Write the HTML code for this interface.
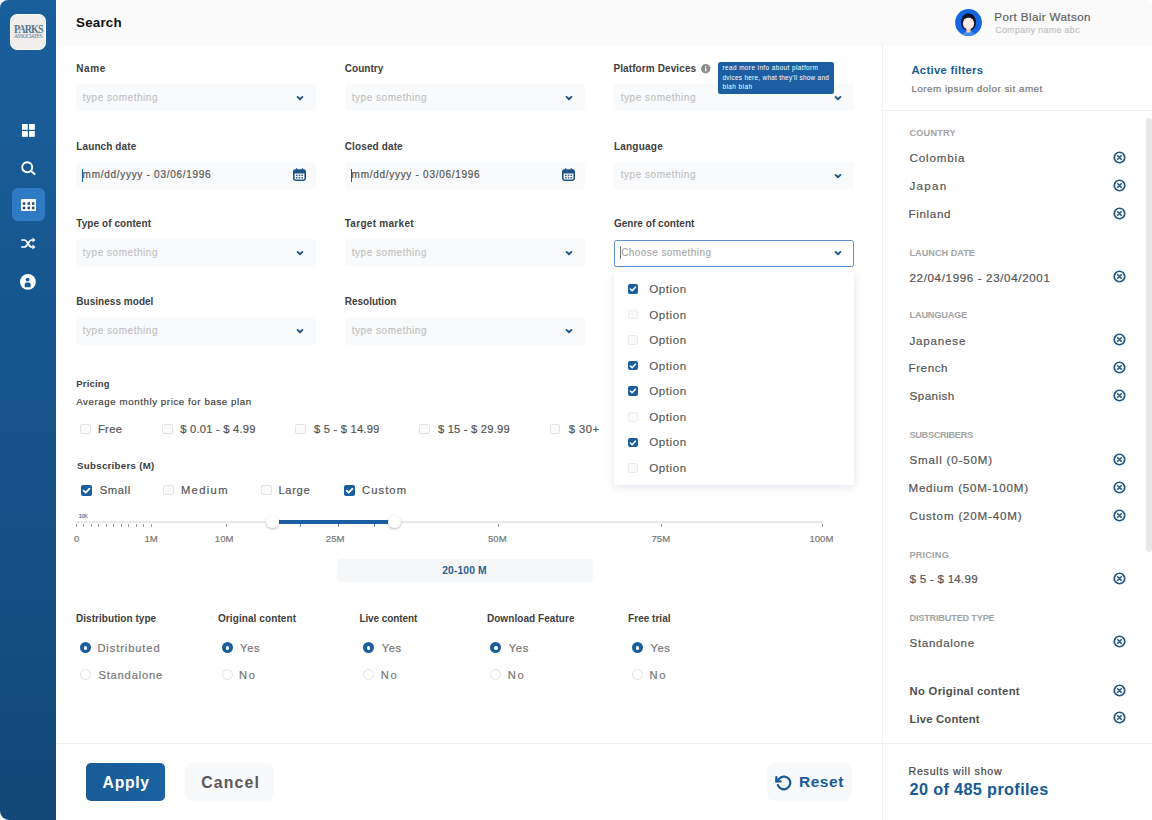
<!DOCTYPE html>
<html><head><meta charset="utf-8">
<style>
*{margin:0;padding:0;box-sizing:border-box}
html,body{width:1152px;height:820px;overflow:hidden;background:#fff;font-family:"Liberation Sans",sans-serif;position:relative}
.a{position:absolute;white-space:nowrap;line-height:1}
</style></head><body>
<div class="a" style="left:0;top:0;width:56px;height:820px;border-radius:8px 0 0 9px;background:linear-gradient(#195f9c,#124878)"></div>
<div class="a" style="left:10px;top:14px;width:36px;height:36px;border-radius:7px;background:#efeeec;border:1px solid #fafafa"></div>
<div class="a" style="left:13.6px;top:24.2px;font-family:'Liberation Serif',serif;font-size:11.2px;font-weight:bold;color:#56778f;letter-spacing:-1.05px;transform-origin:left top;transform:scale(0.9,1.05)">PARKS</div>
<div class="a" style="left:13.8px;top:32.2px;font-family:'Liberation Serif',serif;font-size:6px;color:#56778f;letter-spacing:-0.55px;transform-origin:left top;transform:scale(0.93,1.1)">ASSOCIATES</div>
<svg class="a" style="left:22px;top:124px" width="13" height="13" viewBox="0 0 13 13"><g fill="#fff"><rect x="0" y="0" width="5.8" height="5.8"/><rect x="7" y="0" width="5.8" height="5.8"/><rect x="0" y="7" width="5.8" height="5.8"/><rect x="7" y="7" width="5.8" height="5.8"/></g></svg>
<svg class="a" style="left:20.5px;top:160.5px" width="15" height="14" viewBox="0 0 15 14"><circle cx="6.2" cy="6.2" r="5" fill="none" stroke="#fff" stroke-width="1.9"/><path d="M10 10 L13.5 13" stroke="#fff" stroke-width="2" stroke-linecap="round"/></svg>
<div class="a" style="left:11.5px;top:188.3px;width:33.2px;height:32.7px;border-radius:6px;background:#2f7bc3"></div>
<svg class="a" style="left:20.5px;top:199px" width="15.5" height="12" viewBox="0 0 15.5 12"><rect x="0" y="0" width="15.5" height="12" rx="1.2" fill="#fff"/><g fill="#1f4a72"><rect x="1.8" y="3.3" width="2.5" height="2.5"/><rect x="6.5" y="3.3" width="2.5" height="2.5"/><rect x="10.9" y="3.3" width="2.5" height="2.5"/><rect x="1.8" y="7.7" width="2.5" height="2.5"/><rect x="6.5" y="7.7" width="2.5" height="2.5"/><rect x="10.9" y="7.7" width="2.5" height="2.5"/></g></svg>
<svg class="a" style="left:20.5px;top:237px" width="15" height="13" viewBox="0 0 15 13"><g fill="none" stroke="#fff" stroke-width="1.7" stroke-linecap="round"><path d="M0.8 3 H3.5 C6.5 3 7.5 10 10.5 10 H12.5"/><path d="M0.8 10 H3.5 C6.5 10 7.5 3 10.5 3 H12.5"/></g><path d="M11.5 0.5 L14.5 3 L11.5 5.5 Z M11.5 7.5 L14.5 10 L11.5 12.5 Z" fill="#fff"/></svg>
<svg class="a" style="left:20.3px;top:274px" width="15.8" height="15.8" viewBox="0 0 16 16"><circle cx="8" cy="8" r="8" fill="#fff"/><circle cx="7.7" cy="5.6" r="1.9" fill="#1a5a95"/><path d="M4.8 13.4 V10.6 C4.8 9.4 5.6 8.6 6.8 8.6 H8.8 C10 8.6 10.8 9.4 10.8 10.6 V13.4 Z" fill="#1a5a95"/></svg>
<div class="a" style="left:56px;top:0;width:1096px;height:44.8px;background:#fafafa;border-radius:0 6px 0 0"></div>
<svg class="a" style="left:955.4px;top:8.7px" width="27" height="27" viewBox="0 0 27 27"><defs><clipPath id="cc"><circle cx="13.5" cy="13.5" r="13.4"/></clipPath></defs><circle cx="13.5" cy="13.5" r="13.4" fill="#1565e3"/><g clip-path="url(#cc)"><ellipse cx="13.5" cy="13.2" rx="7.6" ry="8.5" fill="#0f1530"/><path d="M5.5 28 C6.5 24 9.5 22.6 13.5 22.6 C17.5 22.6 20.5 24 21.5 28 Z" fill="#3f8bf0"/><rect x="11.4" y="18.5" width="4.2" height="5" fill="#f6cdb9"/><ellipse cx="13.5" cy="14.6" rx="5.6" ry="6" fill="#fbeae3"/><path d="M7.2 10.5 C7.5 6 10 4.6 13.5 4.6 C17 4.6 19.5 6 19.8 10.5 C18 8.6 16 8.3 13.5 8.3 C11 8.3 9 8.6 7.2 10.5 Z" fill="#0f1530"/></g></svg>
<div class="a" style="left:76px;top:84px;width:240px;height:27.4px;background:#f9fafb;border-radius:3px"></div>
<svg class="a" style="left:296.2px;top:95px" width="8" height="6" viewBox="0 0 8 6"><path d="M1.6 1.9 L4 4.2 L6.4 1.9" fill="none" stroke="#1d5486" stroke-width="1.9" stroke-linecap="round" stroke-linejoin="round"/></svg>
<div class="a" style="left:345px;top:84px;width:240px;height:27.4px;background:#f9fafb;border-radius:3px"></div>
<svg class="a" style="left:565.2px;top:95px" width="8" height="6" viewBox="0 0 8 6"><path d="M1.6 1.9 L4 4.2 L6.4 1.9" fill="none" stroke="#1d5486" stroke-width="1.9" stroke-linecap="round" stroke-linejoin="round"/></svg>
<div class="a" style="left:614px;top:84px;width:240px;height:27.4px;background:#f9fafb;border-radius:3px"></div>
<svg class="a" style="left:834.2px;top:95px" width="8" height="6" viewBox="0 0 8 6"><path d="M1.6 1.9 L4 4.2 L6.4 1.9" fill="none" stroke="#1d5486" stroke-width="1.9" stroke-linecap="round" stroke-linejoin="round"/></svg>
<div class="a" style="left:76px;top:161.6px;width:240px;height:27.4px;background:#f9fafb;border-radius:3px"></div>
<div class="a" style="left:82.2px;top:168.6px;width:1.2px;height:13.5px;background:#1b5e9e"></div>
<svg class="a" style="left:292.5px;top:168.0px" width="13" height="13" viewBox="0 0 13 13"><rect x="0.8" y="2" width="11.4" height="10.2" rx="1.6" fill="#fff" stroke="#1d5486" stroke-width="1.6"/><rect x="0.8" y="2" width="11.4" height="3.4" rx="1" fill="#1d5486"/><rect x="2.8" y="0.3" width="1.5" height="2.6" rx="0.5" fill="#1d5486"/><rect x="8.7" y="0.3" width="1.5" height="2.6" rx="0.5" fill="#1d5486"/><g fill="#3d6186"><rect x="2.9" y="6.6" width="1.7" height="1.5"/><rect x="5.65" y="6.6" width="1.7" height="1.5"/><rect x="8.4" y="6.6" width="1.7" height="1.5"/><rect x="2.9" y="9" width="1.7" height="1.5"/><rect x="5.65" y="9" width="1.7" height="1.5"/><rect x="8.4" y="9" width="1.7" height="1.5"/></g></svg>
<div class="a" style="left:345px;top:161.6px;width:240px;height:27.4px;background:#f9fafb;border-radius:3px"></div>
<div class="a" style="left:351.2px;top:168.6px;width:1.2px;height:13.5px;background:#1b5e9e"></div>
<svg class="a" style="left:561.5px;top:168.0px" width="13" height="13" viewBox="0 0 13 13"><rect x="0.8" y="2" width="11.4" height="10.2" rx="1.6" fill="#fff" stroke="#1d5486" stroke-width="1.6"/><rect x="0.8" y="2" width="11.4" height="3.4" rx="1" fill="#1d5486"/><rect x="2.8" y="0.3" width="1.5" height="2.6" rx="0.5" fill="#1d5486"/><rect x="8.7" y="0.3" width="1.5" height="2.6" rx="0.5" fill="#1d5486"/><g fill="#3d6186"><rect x="2.9" y="6.6" width="1.7" height="1.5"/><rect x="5.65" y="6.6" width="1.7" height="1.5"/><rect x="8.4" y="6.6" width="1.7" height="1.5"/><rect x="2.9" y="9" width="1.7" height="1.5"/><rect x="5.65" y="9" width="1.7" height="1.5"/><rect x="8.4" y="9" width="1.7" height="1.5"/></g></svg>
<div class="a" style="left:614px;top:161.6px;width:240px;height:27.4px;background:#f9fafb;border-radius:3px"></div>
<svg class="a" style="left:834.2px;top:172.6px" width="8" height="6" viewBox="0 0 8 6"><path d="M1.6 1.9 L4 4.2 L6.4 1.9" fill="none" stroke="#1d5486" stroke-width="1.9" stroke-linecap="round" stroke-linejoin="round"/></svg>
<div class="a" style="left:76px;top:239px;width:240px;height:27.4px;background:#f9fafb;border-radius:3px"></div>
<svg class="a" style="left:296.2px;top:250px" width="8" height="6" viewBox="0 0 8 6"><path d="M1.6 1.9 L4 4.2 L6.4 1.9" fill="none" stroke="#1d5486" stroke-width="1.9" stroke-linecap="round" stroke-linejoin="round"/></svg>
<div class="a" style="left:345px;top:239px;width:240px;height:27.4px;background:#f9fafb;border-radius:3px"></div>
<svg class="a" style="left:565.2px;top:250px" width="8" height="6" viewBox="0 0 8 6"><path d="M1.6 1.9 L4 4.2 L6.4 1.9" fill="none" stroke="#1d5486" stroke-width="1.9" stroke-linecap="round" stroke-linejoin="round"/></svg>
<div class="a" style="left:614px;top:239.5px;width:239.5px;height:27px;background:#fff;border:1.5px solid #5891ca;border-radius:2.5px"></div>
<div class="a" style="left:620px;top:246px;width:1px;height:13px;background:#777"></div>
<svg class="a" style="left:833.5px;top:250px" width="8" height="6" viewBox="0 0 8 6"><path d="M1.6 1.9 L4 4.2 L6.4 1.9" fill="none" stroke="#1d5486" stroke-width="1.9" stroke-linecap="round" stroke-linejoin="round"/></svg>
<div class="a" style="left:76px;top:317.2px;width:240px;height:27.4px;background:#f9fafb;border-radius:3px"></div>
<svg class="a" style="left:296.2px;top:328.2px" width="8" height="6" viewBox="0 0 8 6"><path d="M1.6 1.9 L4 4.2 L6.4 1.9" fill="none" stroke="#1d5486" stroke-width="1.9" stroke-linecap="round" stroke-linejoin="round"/></svg>
<div class="a" style="left:345px;top:317.2px;width:240px;height:27.4px;background:#f9fafb;border-radius:3px"></div>
<svg class="a" style="left:565.2px;top:328.2px" width="8" height="6" viewBox="0 0 8 6"><path d="M1.6 1.9 L4 4.2 L6.4 1.9" fill="none" stroke="#1d5486" stroke-width="1.9" stroke-linecap="round" stroke-linejoin="round"/></svg>
<svg class="a" style="left:701.3px;top:64.3px" width="9.4" height="9.4" viewBox="0 0 10 10"><circle cx="5" cy="5" r="5" fill="#8c8c8c"/><rect x="4.3" y="4.3" width="1.4" height="3.5" rx="0.4" fill="#fff"/><circle cx="5" cy="2.9" r="0.75" fill="#fff"/></svg>
<div class="a" style="left:718px;top:62px;width:116.3px;height:31.8px;background:#1b5fa2;border-radius:2.5px"></div>
<div class="a" style="left:80.2px;top:423.7px;width:10.4px;height:10.4px;border-radius:2px;border:1px solid #e4e4e4;background:#fafafa"></div>
<div class="a" style="left:162.3px;top:423.7px;width:10.4px;height:10.4px;border-radius:2px;border:1px solid #e4e4e4;background:#fafafa"></div>
<div class="a" style="left:295.3px;top:423.7px;width:10.4px;height:10.4px;border-radius:2px;border:1px solid #e4e4e4;background:#fafafa"></div>
<div class="a" style="left:419.3px;top:423.7px;width:10.4px;height:10.4px;border-radius:2px;border:1px solid #e4e4e4;background:#fafafa"></div>
<div class="a" style="left:550px;top:423.7px;width:10.4px;height:10.4px;border-radius:2px;border:1px solid #e4e4e4;background:#fafafa"></div>
<div class="a" style="left:81px;top:484.6px;width:11px;height:11px;border-radius:2px;background:#1b5e9e"><svg style="position:absolute;left:0;top:0" width="11" height="11" viewBox="0 0 10 10"><path d="M2.4 5.2 L4.3 7 L7.7 3.3" fill="none" stroke="#fff" stroke-width="1.6" stroke-linecap="round" stroke-linejoin="round"/></svg></div>
<div class="a" style="left:163.4px;top:484.6px;width:10.6px;height:10.6px;border-radius:2px;border:1px solid #e4e4e4;background:#fafafa"></div>
<div class="a" style="left:261.4px;top:484.6px;width:10.6px;height:10.6px;border-radius:2px;border:1px solid #e4e4e4;background:#fafafa"></div>
<div class="a" style="left:343.5px;top:484.6px;width:11px;height:11px;border-radius:2px;background:#1b5e9e"><svg style="position:absolute;left:0;top:0" width="11" height="11" viewBox="0 0 10 10"><path d="M2.4 5.2 L4.3 7 L7.7 3.3" fill="none" stroke="#fff" stroke-width="1.6" stroke-linecap="round" stroke-linejoin="round"/></svg></div>
<div class="a" style="left:76px;top:520.6px;width:747px;height:2px;background:#e9e9e9;border-radius:1px"></div>
<div class="a" style="left:76.00px;top:524px;width:1px;height:3px;background:#999"></div>
<div class="a" style="left:83.47px;top:524px;width:1px;height:3px;background:#999"></div>
<div class="a" style="left:90.94px;top:524px;width:1px;height:3px;background:#999"></div>
<div class="a" style="left:98.41px;top:524px;width:1px;height:3px;background:#999"></div>
<div class="a" style="left:105.88px;top:524px;width:1px;height:3px;background:#999"></div>
<div class="a" style="left:113.35px;top:524px;width:1px;height:3px;background:#999"></div>
<div class="a" style="left:120.82px;top:524px;width:1px;height:3px;background:#999"></div>
<div class="a" style="left:128.29px;top:524px;width:1px;height:3px;background:#999"></div>
<div class="a" style="left:135.76px;top:524px;width:1px;height:3px;background:#999"></div>
<div class="a" style="left:143.23px;top:524px;width:1px;height:3px;background:#999"></div>
<div class="a" style="left:150.70px;top:524px;width:1px;height:3px;background:#999"></div>
<div class="a" style="left:225.5px;top:524px;width:1px;height:3px;background:#999"></div>
<div class="a" style="left:498px;top:524px;width:1px;height:3px;background:#999"></div>
<div class="a" style="left:661px;top:524px;width:1px;height:3px;background:#999"></div>
<div class="a" style="left:822px;top:524px;width:1px;height:3px;background:#999"></div>
<div class="a" style="left:278.6px;top:520px;width:110px;height:4.4px;background:#1b5fa0"></div>
<div class="a" style="left:299.7px;top:524px;width:1px;height:3px;background:#6a88a8"></div>
<div class="a" style="left:337.6px;top:524px;width:1px;height:3px;background:#6a88a8"></div>
<div class="a" style="left:374.4px;top:524px;width:1px;height:3px;background:#6a88a8"></div>
<div class="a" style="left:266.0px;top:515.6px;width:12.8px;height:12.8px;border-radius:50%;background:#fff;box-shadow:0 1px 2.5px rgba(0,0,0,.28)"></div>
<div class="a" style="left:388.20000000000005px;top:515.6px;width:12.8px;height:12.8px;border-radius:50%;background:#fff;box-shadow:0 1px 2.5px rgba(0,0,0,.28)"></div>
<div class="a" style="left:336.6px;top:559px;width:256.6px;height:22.6px;background:#f6f7f9;border-radius:4px"></div>
<div class="a" style="left:79.9px;top:642.3px;width:11.2px;height:11.2px;border-radius:50%;background:#1b5e9e"></div>
<div class="a" style="left:83.8px;top:646.1999999999999px;width:3.4px;height:3.4px;border-radius:50%;background:#fff"></div>
<div class="a" style="left:79.9px;top:669.0px;width:11.2px;height:11.2px;border-radius:50%;border:1px solid #e2e2e2;background:#fff"></div>
<div class="a" style="left:221.6px;top:642.3px;width:11.2px;height:11.2px;border-radius:50%;background:#1b5e9e"></div>
<div class="a" style="left:225.5px;top:646.1999999999999px;width:3.4px;height:3.4px;border-radius:50%;background:#fff"></div>
<div class="a" style="left:221.6px;top:669.0px;width:11.2px;height:11.2px;border-radius:50%;border:1px solid #e2e2e2;background:#fff"></div>
<div class="a" style="left:363.15px;top:642.3px;width:11.2px;height:11.2px;border-radius:50%;background:#1b5e9e"></div>
<div class="a" style="left:367.05px;top:646.1999999999999px;width:3.4px;height:3.4px;border-radius:50%;background:#fff"></div>
<div class="a" style="left:363.15px;top:669.0px;width:11.2px;height:11.2px;border-radius:50%;border:1px solid #e2e2e2;background:#fff"></div>
<div class="a" style="left:490.29999999999995px;top:642.3px;width:11.2px;height:11.2px;border-radius:50%;background:#1b5e9e"></div>
<div class="a" style="left:494.2px;top:646.1999999999999px;width:3.4px;height:3.4px;border-radius:50%;background:#fff"></div>
<div class="a" style="left:490.29999999999995px;top:669.0px;width:11.2px;height:11.2px;border-radius:50%;border:1px solid #e2e2e2;background:#fff"></div>
<div class="a" style="left:631.9px;top:642.3px;width:11.2px;height:11.2px;border-radius:50%;background:#1b5e9e"></div>
<div class="a" style="left:635.8px;top:646.1999999999999px;width:3.4px;height:3.4px;border-radius:50%;background:#fff"></div>
<div class="a" style="left:631.9px;top:669.0px;width:11.2px;height:11.2px;border-radius:50%;border:1px solid #e2e2e2;background:#fff"></div>
<div class="a" style="left:614px;top:272px;width:239.5px;height:213px;background:#fff;border-radius:2px;box-shadow:0 2px 9px rgba(50,70,130,.14)"></div>
<div class="a" style="left:628px;top:284.25px;width:9.6px;height:9.6px;border-radius:2px;background:#1b5e9e"><svg style="position:absolute;left:0;top:0" width="9.6" height="9.6" viewBox="0 0 10 10"><path d="M2.4 5.2 L4.3 7 L7.7 3.3" fill="none" stroke="#fff" stroke-width="1.6" stroke-linecap="round" stroke-linejoin="round"/></svg></div>
<div class="a" style="left:628px;top:309.8px;width:9.6px;height:9.6px;border-radius:2px;border:1px solid #ececec;background:#fafafa"></div>
<div class="a" style="left:628px;top:335.35px;width:9.6px;height:9.6px;border-radius:2px;border:1px solid #ececec;background:#fafafa"></div>
<div class="a" style="left:628px;top:360.9px;width:9.6px;height:9.6px;border-radius:2px;background:#1b5e9e"><svg style="position:absolute;left:0;top:0" width="9.6" height="9.6" viewBox="0 0 10 10"><path d="M2.4 5.2 L4.3 7 L7.7 3.3" fill="none" stroke="#fff" stroke-width="1.6" stroke-linecap="round" stroke-linejoin="round"/></svg></div>
<div class="a" style="left:628px;top:386.45px;width:9.6px;height:9.6px;border-radius:2px;background:#1b5e9e"><svg style="position:absolute;left:0;top:0" width="9.6" height="9.6" viewBox="0 0 10 10"><path d="M2.4 5.2 L4.3 7 L7.7 3.3" fill="none" stroke="#fff" stroke-width="1.6" stroke-linecap="round" stroke-linejoin="round"/></svg></div>
<div class="a" style="left:628px;top:412.0px;width:9.6px;height:9.6px;border-radius:2px;border:1px solid #ececec;background:#fafafa"></div>
<div class="a" style="left:628px;top:437.55px;width:9.6px;height:9.6px;border-radius:2px;background:#1b5e9e"><svg style="position:absolute;left:0;top:0" width="9.6" height="9.6" viewBox="0 0 10 10"><path d="M2.4 5.2 L4.3 7 L7.7 3.3" fill="none" stroke="#fff" stroke-width="1.6" stroke-linecap="round" stroke-linejoin="round"/></svg></div>
<div class="a" style="left:628px;top:463.1px;width:9.6px;height:9.6px;border-radius:2px;border:1px solid #ececec;background:#fafafa"></div>
<div class="a" style="left:56px;top:743px;width:826px;height:1px;background:#f1f1f1"></div>
<div class="a" style="left:86.1px;top:763.2px;width:79.3px;height:37.8px;border-radius:5px;background:linear-gradient(90deg,#185b96,#1a62a2)"></div>
<div class="a" style="left:185px;top:763.2px;width:88.6px;height:37.8px;border-radius:7px;background:#f8f9fa"></div>
<div class="a" style="left:766.5px;top:763.2px;width:85.5px;height:38px;border-radius:8px;background:#f8f9fa"></div>
<svg class="a" style="left:775.2px;top:773.6px" width="17.8" height="17.8" viewBox="0 0 24 24"><g fill="none" stroke="#185b97" stroke-width="3" stroke-linecap="round" stroke-linejoin="round"><polyline points="1.8 4.2 1.8 10 7.6 10"/><path d="M3.9 15 A8.6 8.6 0 1 0 5.9 6 L1.8 10"/></g></svg>
<div class="a" style="left:882px;top:44px;width:1px;height:776px;background:#f1f1f1"></div>
<div class="a" style="left:883px;top:110px;width:269px;height:1px;background:#efefef"></div>
<div class="a" style="left:1146px;top:118px;width:6px;height:434px;background:#e8e8e8;border-radius:3px"></div>
<div class="a" style="left:883px;top:743px;width:269px;height:1px;background:#f1f1f1"></div>
<svg class="a" style="left:1112.5px;top:151.3px" width="13" height="13" viewBox="0 0 13 13"><circle cx="6.5" cy="6.5" r="5.25" fill="none" stroke="#1d5889" stroke-width="1.7"/><path d="M4.75 4.75 L8.25 8.25 M8.25 4.75 L4.75 8.25" stroke="#1d5889" stroke-width="1.6" stroke-linecap="round"/></svg>
<svg class="a" style="left:1112.5px;top:179.3px" width="13" height="13" viewBox="0 0 13 13"><circle cx="6.5" cy="6.5" r="5.25" fill="none" stroke="#1d5889" stroke-width="1.7"/><path d="M4.75 4.75 L8.25 8.25 M8.25 4.75 L4.75 8.25" stroke="#1d5889" stroke-width="1.6" stroke-linecap="round"/></svg>
<svg class="a" style="left:1112.5px;top:207.3px" width="13" height="13" viewBox="0 0 13 13"><circle cx="6.5" cy="6.5" r="5.25" fill="none" stroke="#1d5889" stroke-width="1.7"/><path d="M4.75 4.75 L8.25 8.25 M8.25 4.75 L4.75 8.25" stroke="#1d5889" stroke-width="1.6" stroke-linecap="round"/></svg>
<svg class="a" style="left:1112.5px;top:270.3px" width="13" height="13" viewBox="0 0 13 13"><circle cx="6.5" cy="6.5" r="5.25" fill="none" stroke="#1d5889" stroke-width="1.7"/><path d="M4.75 4.75 L8.25 8.25 M8.25 4.75 L4.75 8.25" stroke="#1d5889" stroke-width="1.6" stroke-linecap="round"/></svg>
<svg class="a" style="left:1112.5px;top:333.3px" width="13" height="13" viewBox="0 0 13 13"><circle cx="6.5" cy="6.5" r="5.25" fill="none" stroke="#1d5889" stroke-width="1.7"/><path d="M4.75 4.75 L8.25 8.25 M8.25 4.75 L4.75 8.25" stroke="#1d5889" stroke-width="1.6" stroke-linecap="round"/></svg>
<svg class="a" style="left:1112.5px;top:361.3px" width="13" height="13" viewBox="0 0 13 13"><circle cx="6.5" cy="6.5" r="5.25" fill="none" stroke="#1d5889" stroke-width="1.7"/><path d="M4.75 4.75 L8.25 8.25 M8.25 4.75 L4.75 8.25" stroke="#1d5889" stroke-width="1.6" stroke-linecap="round"/></svg>
<svg class="a" style="left:1112.5px;top:389.3px" width="13" height="13" viewBox="0 0 13 13"><circle cx="6.5" cy="6.5" r="5.25" fill="none" stroke="#1d5889" stroke-width="1.7"/><path d="M4.75 4.75 L8.25 8.25 M8.25 4.75 L4.75 8.25" stroke="#1d5889" stroke-width="1.6" stroke-linecap="round"/></svg>
<svg class="a" style="left:1112.5px;top:452.8px" width="13" height="13" viewBox="0 0 13 13"><circle cx="6.5" cy="6.5" r="5.25" fill="none" stroke="#1d5889" stroke-width="1.7"/><path d="M4.75 4.75 L8.25 8.25 M8.25 4.75 L4.75 8.25" stroke="#1d5889" stroke-width="1.6" stroke-linecap="round"/></svg>
<svg class="a" style="left:1112.5px;top:480.8px" width="13" height="13" viewBox="0 0 13 13"><circle cx="6.5" cy="6.5" r="5.25" fill="none" stroke="#1d5889" stroke-width="1.7"/><path d="M4.75 4.75 L8.25 8.25 M8.25 4.75 L4.75 8.25" stroke="#1d5889" stroke-width="1.6" stroke-linecap="round"/></svg>
<svg class="a" style="left:1112.5px;top:508.8px" width="13" height="13" viewBox="0 0 13 13"><circle cx="6.5" cy="6.5" r="5.25" fill="none" stroke="#1d5889" stroke-width="1.7"/><path d="M4.75 4.75 L8.25 8.25 M8.25 4.75 L4.75 8.25" stroke="#1d5889" stroke-width="1.6" stroke-linecap="round"/></svg>
<svg class="a" style="left:1112.5px;top:571.8px" width="13" height="13" viewBox="0 0 13 13"><circle cx="6.5" cy="6.5" r="5.25" fill="none" stroke="#1d5889" stroke-width="1.7"/><path d="M4.75 4.75 L8.25 8.25 M8.25 4.75 L4.75 8.25" stroke="#1d5889" stroke-width="1.6" stroke-linecap="round"/></svg>
<svg class="a" style="left:1112.5px;top:635.3px" width="13" height="13" viewBox="0 0 13 13"><circle cx="6.5" cy="6.5" r="5.25" fill="none" stroke="#1d5889" stroke-width="1.7"/><path d="M4.75 4.75 L8.25 8.25 M8.25 4.75 L4.75 8.25" stroke="#1d5889" stroke-width="1.6" stroke-linecap="round"/></svg>
<svg class="a" style="left:1112.5px;top:683.8px" width="13" height="13" viewBox="0 0 13 13"><circle cx="6.5" cy="6.5" r="5.25" fill="none" stroke="#1d5889" stroke-width="1.7"/><path d="M4.75 4.75 L8.25 8.25 M8.25 4.75 L4.75 8.25" stroke="#1d5889" stroke-width="1.6" stroke-linecap="round"/></svg>
<svg class="a" style="left:1112.5px;top:711.3px" width="13" height="13" viewBox="0 0 13 13"><circle cx="6.5" cy="6.5" r="5.25" fill="none" stroke="#1d5889" stroke-width="1.7"/><path d="M4.75 4.75 L8.25 8.25 M8.25 4.75 L4.75 8.25" stroke="#1d5889" stroke-width="1.6" stroke-linecap="round"/></svg>
<div class="a" style="left:76.00px;top:16.30px;font-size:13.4px;font-weight:bold;color:#111;letter-spacing:0.200px;">Search</div>
<div class="a" style="left:994.30px;top:11.10px;font-size:11.6px;font-weight:normal;color:#606060;letter-spacing:0.400px;-webkit-text-stroke:0.2px #606060;">Port Blair Watson</div>
<div class="a" style="left:995.30px;top:26.30px;font-size:8.8px;font-weight:normal;color:#c5c5c5;letter-spacing:0.367px;-webkit-text-stroke:0.2px #c5c5c5;">Company name abc</div>
<div class="a" style="left:76.30px;top:63.80px;font-size:10px;font-weight:bold;color:#404040;letter-spacing:0.600px;">Name</div>
<div class="a" style="left:344.80px;top:63.80px;font-size:10px;font-weight:bold;color:#404040;letter-spacing:0.017px;">Country</div>
<div class="a" style="left:613.40px;top:63.80px;font-size:10px;font-weight:bold;color:#404040;letter-spacing:0.107px;">Platform Devices</div>
<div class="a" style="left:76.30px;top:141.60px;font-size:10px;font-weight:bold;color:#404040;letter-spacing:0.100px;">Launch date</div>
<div class="a" style="left:344.70px;top:141.60px;font-size:10px;font-weight:bold;color:#404040;letter-spacing:0.130px;">Closed date</div>
<div class="a" style="left:613.90px;top:141.60px;font-size:10px;font-weight:bold;color:#404040;letter-spacing:0.229px;">Language</div>
<div class="a" style="left:76.30px;top:219.40px;font-size:10px;font-weight:bold;color:#404040;letter-spacing:0.071px;">Type of content</div>
<div class="a" style="left:344.70px;top:219.40px;font-size:10px;font-weight:bold;color:#404040;letter-spacing:0.292px;">Target market</div>
<div class="a" style="left:613.90px;top:219.40px;font-size:10px;font-weight:bold;color:#404040;letter-spacing:0.033px;">Genre of content</div>
<div class="a" style="left:76.30px;top:297.20px;font-size:10px;font-weight:bold;color:#404040;letter-spacing:0.031px;">Business model</div>
<div class="a" style="left:344.70px;top:297.20px;font-size:10px;font-weight:bold;color:#404040;letter-spacing:0.000px;">Resolution</div>
<div class="a" style="left:82.70px;top:92.65px;font-size:10px;font-weight:normal;color:#c0c0c0;letter-spacing:0.538px;-webkit-text-stroke:0.1px #c0c0c0;">type something</div>
<div class="a" style="left:351.70px;top:92.65px;font-size:10px;font-weight:normal;color:#c0c0c0;letter-spacing:0.538px;-webkit-text-stroke:0.1px #c0c0c0;">type something</div>
<div class="a" style="left:620.70px;top:92.65px;font-size:10px;font-weight:normal;color:#c0c0c0;letter-spacing:0.538px;-webkit-text-stroke:0.1px #c0c0c0;">type something</div>
<div class="a" style="left:82.60px;top:170.25px;font-size:10px;font-weight:normal;color:#555;letter-spacing:0.714px;-webkit-text-stroke:0.2px #555;">mm/dd/yyyy - 03/06/1996</div>
<div class="a" style="left:351.60px;top:170.25px;font-size:10px;font-weight:normal;color:#555;letter-spacing:0.714px;-webkit-text-stroke:0.2px #555;">mm/dd/yyyy - 03/06/1996</div>
<div class="a" style="left:620.70px;top:170.25px;font-size:10px;font-weight:normal;color:#c0c0c0;letter-spacing:0.538px;-webkit-text-stroke:0.1px #c0c0c0;">type something</div>
<div class="a" style="left:82.70px;top:247.65px;font-size:10px;font-weight:normal;color:#c0c0c0;letter-spacing:0.538px;-webkit-text-stroke:0.1px #c0c0c0;">type something</div>
<div class="a" style="left:351.70px;top:247.65px;font-size:10px;font-weight:normal;color:#c0c0c0;letter-spacing:0.538px;-webkit-text-stroke:0.1px #c0c0c0;">type something</div>
<div class="a" style="left:621.20px;top:247.65px;font-size:10px;font-weight:normal;color:#a5a5a5;letter-spacing:0.427px;-webkit-text-stroke:0.1px #a5a5a5;">Choose something</div>
<div class="a" style="left:82.70px;top:325.85px;font-size:10px;font-weight:normal;color:#c0c0c0;letter-spacing:0.538px;-webkit-text-stroke:0.1px #c0c0c0;">type something</div>
<div class="a" style="left:351.70px;top:325.85px;font-size:10px;font-weight:normal;color:#c0c0c0;letter-spacing:0.538px;-webkit-text-stroke:0.1px #c0c0c0;">type something</div>
<div class="a" style="left:722.50px;top:65.30px;font-size:6.4px;font-weight:normal;color:#fff;letter-spacing:0.414px;">read more info about platform</div>
<div class="a" style="left:722.50px;top:74.70px;font-size:6.4px;font-weight:normal;color:#fff;letter-spacing:0.288px;">dvices here, what they'll show and</div>
<div class="a" style="left:722.50px;top:84.10px;font-size:6.4px;font-weight:normal;color:#fff;letter-spacing:0.438px;">blah blah</div>
<div class="a" style="left:76.30px;top:378.70px;font-size:9.5px;font-weight:bold;color:#404040;letter-spacing:0.167px;">Pricing</div>
<div class="a" style="left:76.25px;top:396.50px;font-size:9.7px;font-weight:normal;color:#444;letter-spacing:0.588px;-webkit-text-stroke:0.2px #444;">Average monthly price for base plan</div>
<div class="a" style="left:97.90px;top:424.10px;font-size:11.2px;font-weight:normal;color:#555;letter-spacing:0.400px;-webkit-text-stroke:0.2px #555;">Free</div>
<div class="a" style="left:180.30px;top:424.10px;font-size:11.2px;font-weight:normal;color:#555;letter-spacing:0.214px;-webkit-text-stroke:0.2px #555;">$ 0.01 - $ 4.99</div>
<div class="a" style="left:313.90px;top:424.10px;font-size:11.2px;font-weight:normal;color:#555;letter-spacing:0.217px;-webkit-text-stroke:0.2px #555;">$ 5 - $ 14.99</div>
<div class="a" style="left:437.90px;top:424.10px;font-size:11.2px;font-weight:normal;color:#555;letter-spacing:0.208px;-webkit-text-stroke:0.2px #555;">$ 15 - $ 29.99</div>
<div class="a" style="left:568.70px;top:424.10px;font-size:11.2px;font-weight:normal;color:#555;letter-spacing:0.525px;-webkit-text-stroke:0.2px #555;">$ 30+</div>
<div class="a" style="left:77.10px;top:461.20px;font-size:9.7px;font-weight:bold;color:#404040;letter-spacing:0.279px;">Subscribers (M)</div>
<div class="a" style="left:99.70px;top:485.00px;font-size:11.2px;font-weight:normal;color:#555;letter-spacing:0.625px;-webkit-text-stroke:0.2px #555;">Small</div>
<div class="a" style="left:180.90px;top:485.00px;font-size:11.2px;font-weight:normal;color:#555;letter-spacing:1.360px;-webkit-text-stroke:0.2px #555;">Medium</div>
<div class="a" style="left:278.50px;top:485.00px;font-size:11.2px;font-weight:normal;color:#555;letter-spacing:0.625px;-webkit-text-stroke:0.2px #555;">Large</div>
<div class="a" style="left:362.00px;top:485.00px;font-size:11.2px;font-weight:normal;color:#555;letter-spacing:1.080px;-webkit-text-stroke:0.2px #555;">Custom</div>
<div class="a" style="left:78.75px;top:514.30px;font-size:5.5px;font-weight:normal;color:#777;letter-spacing:-0.300px;-webkit-text-stroke:0.2px #777;">10K</div>
<div class="a" style="left:74.00px;top:534.00px;font-size:9.6px;font-weight:normal;color:#777;letter-spacing:0.000px;-webkit-text-stroke:0.2px #777;">0</div>
<div class="a" style="left:144.50px;top:534.00px;font-size:9.6px;font-weight:normal;color:#777;letter-spacing:0.000px;-webkit-text-stroke:0.2px #777;">1M</div>
<div class="a" style="left:214.80px;top:534.00px;font-size:9.6px;font-weight:normal;color:#777;letter-spacing:0.000px;-webkit-text-stroke:0.2px #777;">10M</div>
<div class="a" style="left:325.80px;top:534.00px;font-size:9.6px;font-weight:normal;color:#777;letter-spacing:0.000px;-webkit-text-stroke:0.2px #777;">25M</div>
<div class="a" style="left:488.00px;top:534.00px;font-size:9.6px;font-weight:normal;color:#777;letter-spacing:0.000px;-webkit-text-stroke:0.2px #777;">50M</div>
<div class="a" style="left:651.50px;top:534.00px;font-size:9.6px;font-weight:normal;color:#777;letter-spacing:0.000px;-webkit-text-stroke:0.2px #777;">75M</div>
<div class="a" style="left:809.40px;top:534.00px;font-size:9.6px;font-weight:normal;color:#777;letter-spacing:0.000px;-webkit-text-stroke:0.2px #777;">100M</div>
<div class="a" style="left:442.30px;top:565.60px;font-size:10.3px;font-weight:bold;color:#2a5f92;letter-spacing:0.100px;">20-100 M</div>
<div class="a" style="left:76.00px;top:613.50px;font-size:10px;font-weight:bold;color:#404040;letter-spacing:0.044px;">Distribution type</div>
<div class="a" style="left:218.00px;top:613.50px;font-size:10px;font-weight:bold;color:#404040;letter-spacing:0.087px;">Original content</div>
<div class="a" style="left:359.40px;top:613.50px;font-size:10px;font-weight:bold;color:#404040;letter-spacing:-0.091px;">Live content</div>
<div class="a" style="left:486.90px;top:613.50px;font-size:10px;font-weight:bold;color:#404040;letter-spacing:0.067px;">Download Feature</div>
<div class="a" style="left:628.10px;top:613.50px;font-size:10px;font-weight:bold;color:#404040;letter-spacing:0.022px;">Free trial</div>
<div class="a" style="left:97.40px;top:642.80px;font-size:11.2px;font-weight:normal;color:#777;letter-spacing:0.880px;-webkit-text-stroke:0.2px #777;">Distributed</div>
<div class="a" style="left:98.40px;top:669.50px;font-size:11.2px;font-weight:normal;color:#777;letter-spacing:0.800px;-webkit-text-stroke:0.2px #777;">Standalone</div>
<div class="a" style="left:240.10px;top:642.80px;font-size:11.2px;font-weight:normal;color:#777;letter-spacing:0.600px;-webkit-text-stroke:0.2px #777;">Yes</div>
<div class="a" style="left:239.10px;top:669.50px;font-size:11.2px;font-weight:normal;color:#777;letter-spacing:1.700px;-webkit-text-stroke:0.2px #777;">No</div>
<div class="a" style="left:381.65px;top:642.80px;font-size:11.2px;font-weight:normal;color:#777;letter-spacing:0.600px;-webkit-text-stroke:0.2px #777;">Yes</div>
<div class="a" style="left:380.65px;top:669.50px;font-size:11.2px;font-weight:normal;color:#777;letter-spacing:1.700px;-webkit-text-stroke:0.2px #777;">No</div>
<div class="a" style="left:508.80px;top:642.80px;font-size:11.2px;font-weight:normal;color:#777;letter-spacing:0.600px;-webkit-text-stroke:0.2px #777;">Yes</div>
<div class="a" style="left:507.80px;top:669.50px;font-size:11.2px;font-weight:normal;color:#777;letter-spacing:1.700px;-webkit-text-stroke:0.2px #777;">No</div>
<div class="a" style="left:650.40px;top:642.80px;font-size:11.2px;font-weight:normal;color:#777;letter-spacing:0.600px;-webkit-text-stroke:0.2px #777;">Yes</div>
<div class="a" style="left:649.40px;top:669.50px;font-size:11.2px;font-weight:normal;color:#777;letter-spacing:1.700px;-webkit-text-stroke:0.2px #777;">No</div>
<div class="a" style="left:649.20px;top:283.10px;font-size:11.6px;font-weight:normal;color:#585858;letter-spacing:0.560px;-webkit-text-stroke:0.15px #585858;">Option</div>
<div class="a" style="left:649.20px;top:308.65px;font-size:11.6px;font-weight:normal;color:#585858;letter-spacing:0.560px;-webkit-text-stroke:0.15px #585858;">Option</div>
<div class="a" style="left:649.20px;top:334.20px;font-size:11.6px;font-weight:normal;color:#585858;letter-spacing:0.560px;-webkit-text-stroke:0.15px #585858;">Option</div>
<div class="a" style="left:649.20px;top:359.75px;font-size:11.6px;font-weight:normal;color:#585858;letter-spacing:0.560px;-webkit-text-stroke:0.15px #585858;">Option</div>
<div class="a" style="left:649.20px;top:385.30px;font-size:11.6px;font-weight:normal;color:#585858;letter-spacing:0.560px;-webkit-text-stroke:0.15px #585858;">Option</div>
<div class="a" style="left:649.20px;top:410.85px;font-size:11.6px;font-weight:normal;color:#585858;letter-spacing:0.560px;-webkit-text-stroke:0.15px #585858;">Option</div>
<div class="a" style="left:649.20px;top:436.40px;font-size:11.6px;font-weight:normal;color:#585858;letter-spacing:0.560px;-webkit-text-stroke:0.15px #585858;">Option</div>
<div class="a" style="left:649.20px;top:461.95px;font-size:11.6px;font-weight:normal;color:#585858;letter-spacing:0.560px;-webkit-text-stroke:0.15px #585858;">Option</div>
<div class="a" style="left:102.60px;top:774.50px;font-size:15.8px;font-weight:bold;color:#fff;letter-spacing:0.625px;">Apply</div>
<div class="a" style="left:201.20px;top:774.90px;font-size:15.8px;font-weight:bold;color:#585858;letter-spacing:1.160px;">Cancel</div>
<div class="a" style="left:799.00px;top:774.30px;font-size:15.5px;font-weight:bold;color:#185b97;letter-spacing:0.525px;">Reset</div>
<div class="a" style="left:911.40px;top:64.50px;font-size:11.3px;font-weight:bold;color:#185b97;letter-spacing:0.292px;">Active filters</div>
<div class="a" style="left:911.40px;top:84.20px;font-size:9.9px;font-weight:normal;color:#777;letter-spacing:0.472px;-webkit-text-stroke:0.2px #777;">Lorem ipsum dolor sit amet</div>
<div class="a" style="left:909.50px;top:129.40px;font-size:9.2px;font-weight:bold;color:#a3a3a3;letter-spacing:0.167px;">COUNTRY</div>
<div class="a" style="left:909.50px;top:249.00px;font-size:9.2px;font-weight:bold;color:#a3a3a3;letter-spacing:-0.030px;">LAUNCH DATE</div>
<div class="a" style="left:909.50px;top:311.30px;font-size:9.2px;font-weight:bold;color:#a3a3a3;letter-spacing:-0.175px;">LAUNGUAGE</div>
<div class="a" style="left:909.50px;top:431.10px;font-size:9.2px;font-weight:bold;color:#a3a3a3;letter-spacing:-0.330px;">SUBSCRIBERS</div>
<div class="a" style="left:909.50px;top:550.50px;font-size:9.2px;font-weight:bold;color:#a3a3a3;letter-spacing:0.167px;">PRICING</div>
<div class="a" style="left:909.50px;top:614.00px;font-size:9.2px;font-weight:bold;color:#a3a3a3;letter-spacing:-0.207px;">DISTRIBUTED TYPE</div>
<div class="a" style="left:909.50px;top:152.40px;font-size:11.6px;font-weight:normal;color:#555;letter-spacing:0.857px;-webkit-text-stroke:0.2px #555;">Colombia</div>
<div class="a" style="left:909.50px;top:180.40px;font-size:11.6px;font-weight:normal;color:#555;letter-spacing:1.275px;-webkit-text-stroke:0.2px #555;">Japan</div>
<div class="a" style="left:908.50px;top:208.40px;font-size:11.6px;font-weight:normal;color:#555;letter-spacing:0.650px;-webkit-text-stroke:0.2px #555;">Finland</div>
<div class="a" style="left:909.50px;top:271.50px;font-size:11.6px;font-weight:normal;color:#555;letter-spacing:0.636px;-webkit-text-stroke:0.2px #555;">22/04/1996 - 23/04/2001</div>
<div class="a" style="left:909.50px;top:334.50px;font-size:11.6px;font-weight:normal;color:#555;letter-spacing:0.800px;-webkit-text-stroke:0.2px #555;">Japanese</div>
<div class="a" style="left:908.50px;top:362.35px;font-size:11.6px;font-weight:normal;color:#555;letter-spacing:0.580px;-webkit-text-stroke:0.2px #555;">French</div>
<div class="a" style="left:909.50px;top:390.30px;font-size:11.6px;font-weight:normal;color:#555;letter-spacing:0.483px;-webkit-text-stroke:0.2px #555;">Spanish</div>
<div class="a" style="left:909.50px;top:453.60px;font-size:11.6px;font-weight:normal;color:#555;letter-spacing:0.817px;-webkit-text-stroke:0.2px #555;">Small (0-50M)</div>
<div class="a" style="left:908.50px;top:481.60px;font-size:11.6px;font-weight:normal;color:#555;letter-spacing:0.744px;-webkit-text-stroke:0.2px #555;">Medium (50M-100M)</div>
<div class="a" style="left:909.50px;top:509.60px;font-size:11.6px;font-weight:normal;color:#555;letter-spacing:0.820px;-webkit-text-stroke:0.2px #555;">Custom (20M-40M)</div>
<div class="a" style="left:909.50px;top:573.00px;font-size:11.6px;font-weight:normal;color:#555;letter-spacing:0.258px;-webkit-text-stroke:0.2px #555;">$ 5 - $ 14.99</div>
<div class="a" style="left:909.50px;top:636.50px;font-size:11.6px;font-weight:normal;color:#555;letter-spacing:0.667px;-webkit-text-stroke:0.2px #555;">Standalone</div>
<div class="a" style="left:909.50px;top:685.90px;font-size:11.3px;font-weight:bold;color:#505050;letter-spacing:0.294px;">No Original content</div>
<div class="a" style="left:909.50px;top:713.50px;font-size:11.3px;font-weight:bold;color:#505050;letter-spacing:0.155px;">Live Content</div>
<div class="a" style="left:908.50px;top:766.20px;font-size:10.6px;font-weight:normal;color:#444;letter-spacing:0.781px;-webkit-text-stroke:0.2px #444;">Results will show</div>
<div class="a" style="left:909.50px;top:781.40px;font-size:16.3px;font-weight:bold;color:#175a95;letter-spacing:0.341px;">20 of 485 profiles</div>
</body></html>
